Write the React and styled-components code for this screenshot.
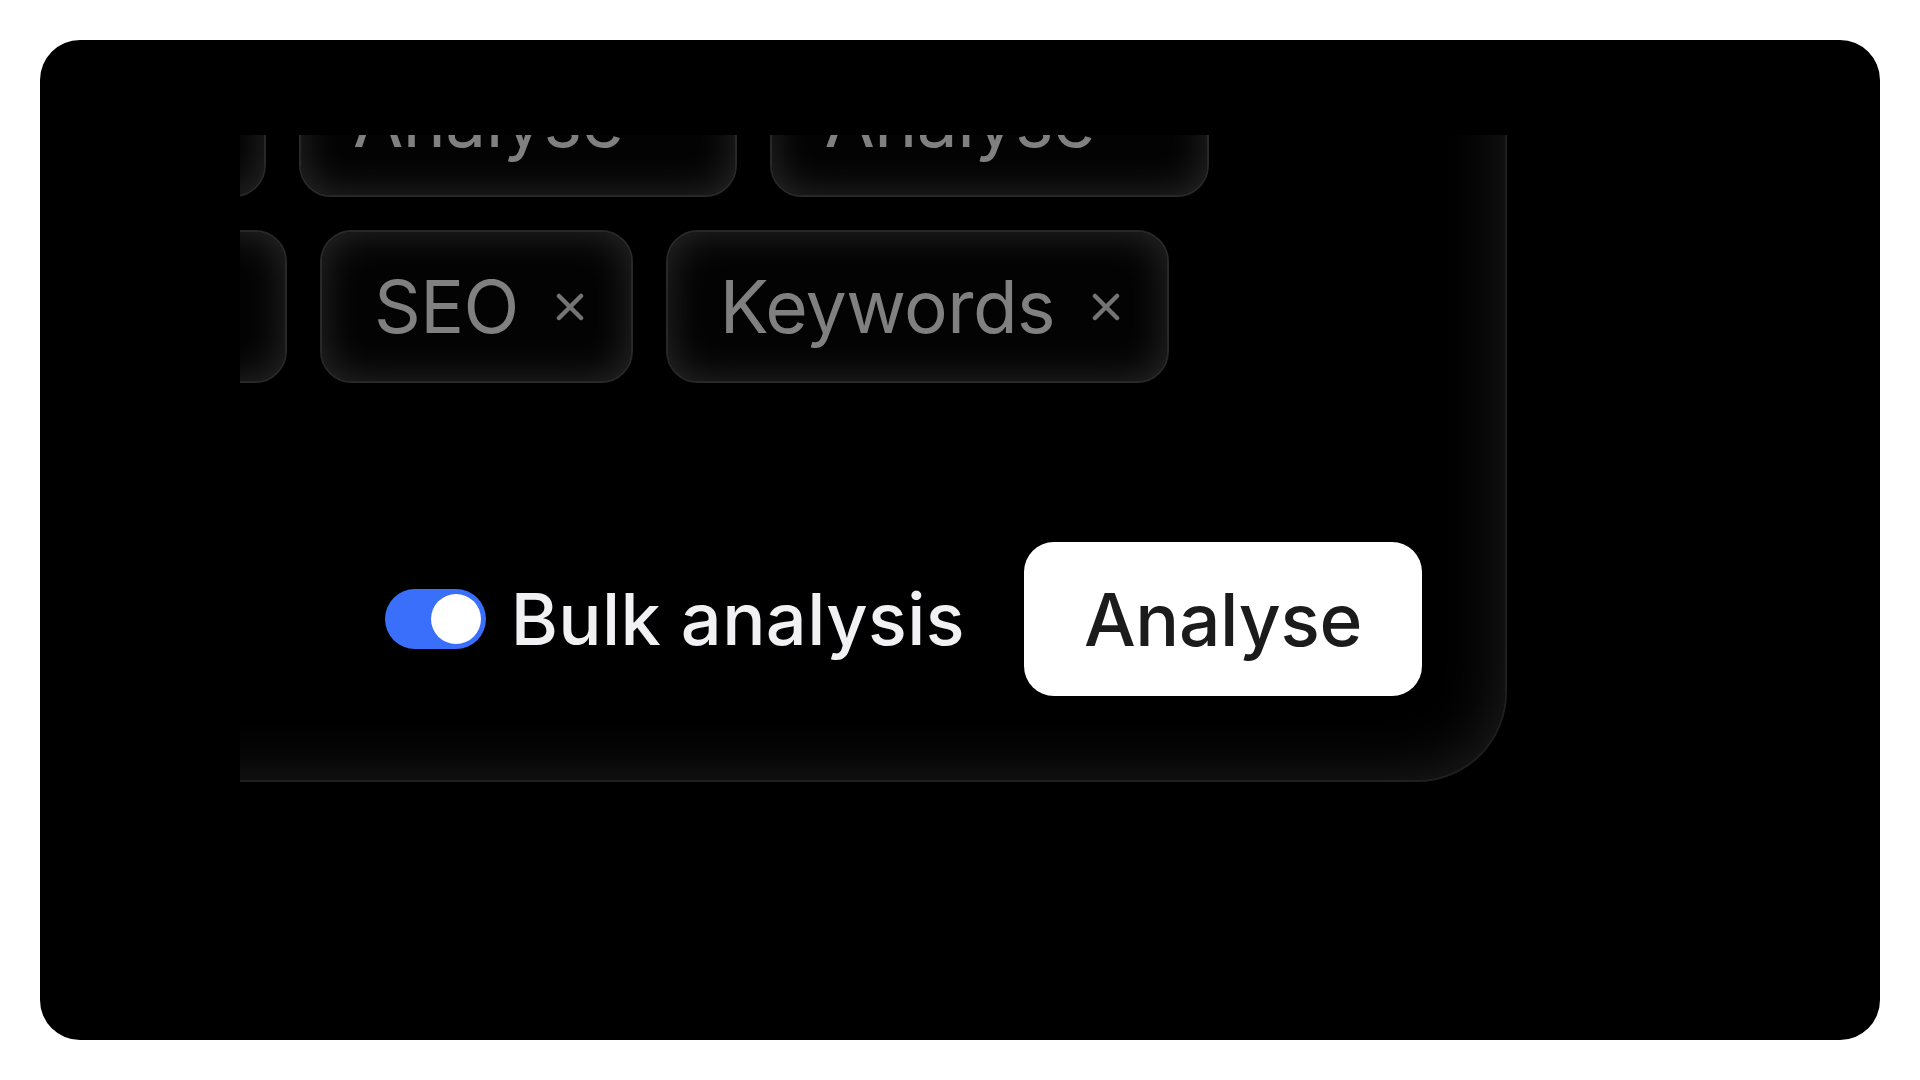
import React from "react";
import styled, { createGlobalStyle } from "styled-components";

const Global = createGlobalStyle`
  html, body { margin: 0; padding: 0; background: #ffffff; }
  body { font-family: Inter, "Noto Sans", "Liberation Sans", sans-serif; }
  * { box-sizing: border-box; }
`;

const Frame = styled.div`
  margin: 40px;
  width: 1840px;
  height: 1000px;
  background: #000;
  border-radius: 40px;
  overflow: hidden;
  display: flex;
  padding: 95px 0 0 200px;
`;

const Viewport = styled.div`
  flex: 1;
  overflow: hidden;
`;

const Panel = styled.div`
  margin: -175px 0 0 -200px;
  width: 1467px;
  height: 822px;
  display: flex;
  flex-direction: column;
  padding: 82px 83px 84px 18px;
  background: #000;
  border: 2px solid #1f1f1f;
  border-radius: 90px;
  box-shadow: inset 0 0 64px rgba(255, 255, 255, 0.13);
`;

const ChipRow = styled.div`
  display: flex;
  gap: 33px;
  margin-bottom: 33px;
`;

const Chip = styled.div`
  flex: none;
  display: inline-flex;
  align-items: center;
  justify-content: flex-end;
  gap: 37px;
  height: 153px;
  width: ${(p) => (p.$w ? `${p.$w}px` : "auto")};
  padding: 0 47px 0 52px;
  border-radius: 32px;
  background: #030303;
  border: 2px solid #282828;
  box-shadow: inset 0 0 42px rgba(255, 255, 255, 0.16);
  color: #808080;
  font-size: 73px;
  font-weight: 400;
  letter-spacing: -0.6px;
  white-space: nowrap;
`;

const ChipLabel = styled.span`
  line-height: 1;
`;

const CloseIcon = styled.svg`
  flex: none;
  width: 28px;
  height: 28px;
  display: block;
`;

const Footer = styled.div`
  margin-top: 126px;
  display: flex;
  justify-content: flex-end;
  align-items: center;
  gap: 59px;
`;

const ToggleGroup = styled.label`
  display: flex;
  align-items: center;
  gap: 25px;
`;

const Track = styled.span`
  width: 101px;
  height: 60px;
  border-radius: 30px;
  background: #3a6ffb;
  display: flex;
  align-items: center;
  justify-content: ${(p) => (p.$on ? "flex-end" : "flex-start")};
  padding: 0 5px;
`;

const Knob = styled.span`
  width: 50px;
  height: 50px;
  border-radius: 50%;
  background: #fff;
`;

const ToggleText = styled.span`
  color: #f1f1f3;
  font-size: 72px;
  font-weight: 450;
  line-height: 1;
  letter-spacing: 0.4px;
`;

const PrimaryButton = styled.button`
  height: 154px;
  padding: 0 60px;
  border: none;
  border-radius: 30px;
  background: #ffffff;
  color: #1b1b1b;
  font-family: inherit;
  font-size: 73px;
  font-weight: 450;
  letter-spacing: -0.3px;
  line-height: 1;
`;

const X = () => (
  <CloseIcon viewBox="0 0 28 28">
    <path d="M3 3 L25 25 M25 3 L3 25" stroke="#747474" strokeWidth="4.5" strokeLinecap="round" />
  </CloseIcon>
);

const TagChip = ({ label, w }) => (
  <Chip $w={w}>
    <ChipLabel>{label}</ChipLabel>
    <X />
  </Chip>
);

export default function App() {
  return (
    <>
      <Global />
      <Frame>
        <Viewport>
          <Panel>
            <ChipRow>
              <TagChip label="Text" w={206} />
              <TagChip label="Analyse" />
              <TagChip label="Analyse" />
            </ChipRow>
            <ChipRow>
              <TagChip label="Tags" w={227} />
              <TagChip label="SEO" />
              <TagChip label="Keywords" />
            </ChipRow>
            <Footer>
              <ToggleGroup>
                <Track $on>
                  <Knob />
                </Track>
                <ToggleText>Bulk analysis</ToggleText>
              </ToggleGroup>
              <PrimaryButton>Analyse</PrimaryButton>
            </Footer>
          </Panel>
        </Viewport>
      </Frame>
    </>
  );
}
